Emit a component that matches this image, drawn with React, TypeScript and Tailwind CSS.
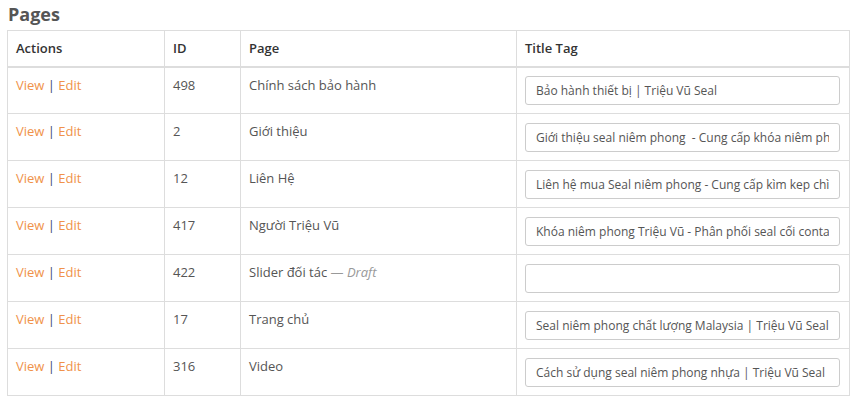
import React from 'react';

const rows = [
  { id: 498, page: 'Chính sách bảo hành', title: 'Bảo hành thiết bị | Triệu Vũ Seal' },
  { id: 2, page: 'Giới thiệu', title: 'Giới thiệu seal niêm phong  - Cung cấp khóa niêm phong' },
  { id: 12, page: 'Liên Hệ', title: 'Liên hệ mua Seal niêm phong - Cung cấp kìm kep chì' },
  { id: 417, page: 'Người Triệu Vũ', title: 'Khóa niêm phong Triệu Vũ - Phân phối seal cối container' },
  { id: 422, page: 'Slider đối tác', draft: true, title: '' },
  { id: 17, page: 'Trang chủ', title: 'Seal niêm phong chất lượng Malaysia | Triệu Vũ Seal' },
  { id: 316, page: 'Video', title: 'Cách sử dụng seal niêm phong nhựa | Triệu Vũ Seal' },
];

const App = () => {
  return (
    <div className="bg-white w-[867px] h-[403px] px-[7px] pt-[1px] font-['Open_Sans',sans-serif] text-[13px] text-[#555]">
      <h2 className="text-[18px] font-bold leading-[26px] text-[#555] ml-[1px]">Pages</h2>
      <table className="mt-[3px] w-[843px] border-collapse border border-[#ddd] table-fixed">
        <thead>
          <tr className="border-b-2 border-[#ddd]">
            <th className="w-[157px] border border-[#ddd] px-[8px] h-[36px] text-left font-semibold text-[#333]">Actions</th>
            <th className="w-[76px] border border-[#ddd] px-[8px] text-left font-semibold text-[#333]">ID</th>
            <th className="w-[276px] border border-[#ddd] px-[8px] text-left font-semibold text-[#333]">Page</th>
            <th className="border border-[#ddd] px-[8px] text-left font-semibold text-[#333]">Title Tag</th>
          </tr>
        </thead>
        <tbody>
          {rows.map(r => (
            <tr key={r.id} className="border-t border-[#ddd]">
              <td className="border border-[#ddd] px-[8px] pt-[8px] h-[47px] align-top">
                <span className="text-[#f0924a]">View</span>
                <span className="text-[#3a4a6a]"> | </span>
                <span className="text-[#f0924a]">Edit</span>
              </td>
              <td className="border border-[#ddd] px-[8px] pt-[8px] align-top">{r.id}</td>
              <td className="border border-[#ddd] px-[8px] pt-[8px] align-top">
                {r.page}
                {r.draft && (
                  <span className="text-[#999]">
                    {' — '}
                    <em>Draft</em>
                  </span>
                )}
              </td>
              <td className="border border-[#ddd] px-[8px] align-middle">
                <input
                  readOnly
                  value={r.title}
                  className="w-[315px] h-[29px] border border-[#ccc] rounded-[3px] px-[10px] text-[12px] text-[#555] bg-white outline-none"
                />
              </td>
            </tr>
          ))}
        </tbody>
      </table>
    </div>
  );
};

export default App;
